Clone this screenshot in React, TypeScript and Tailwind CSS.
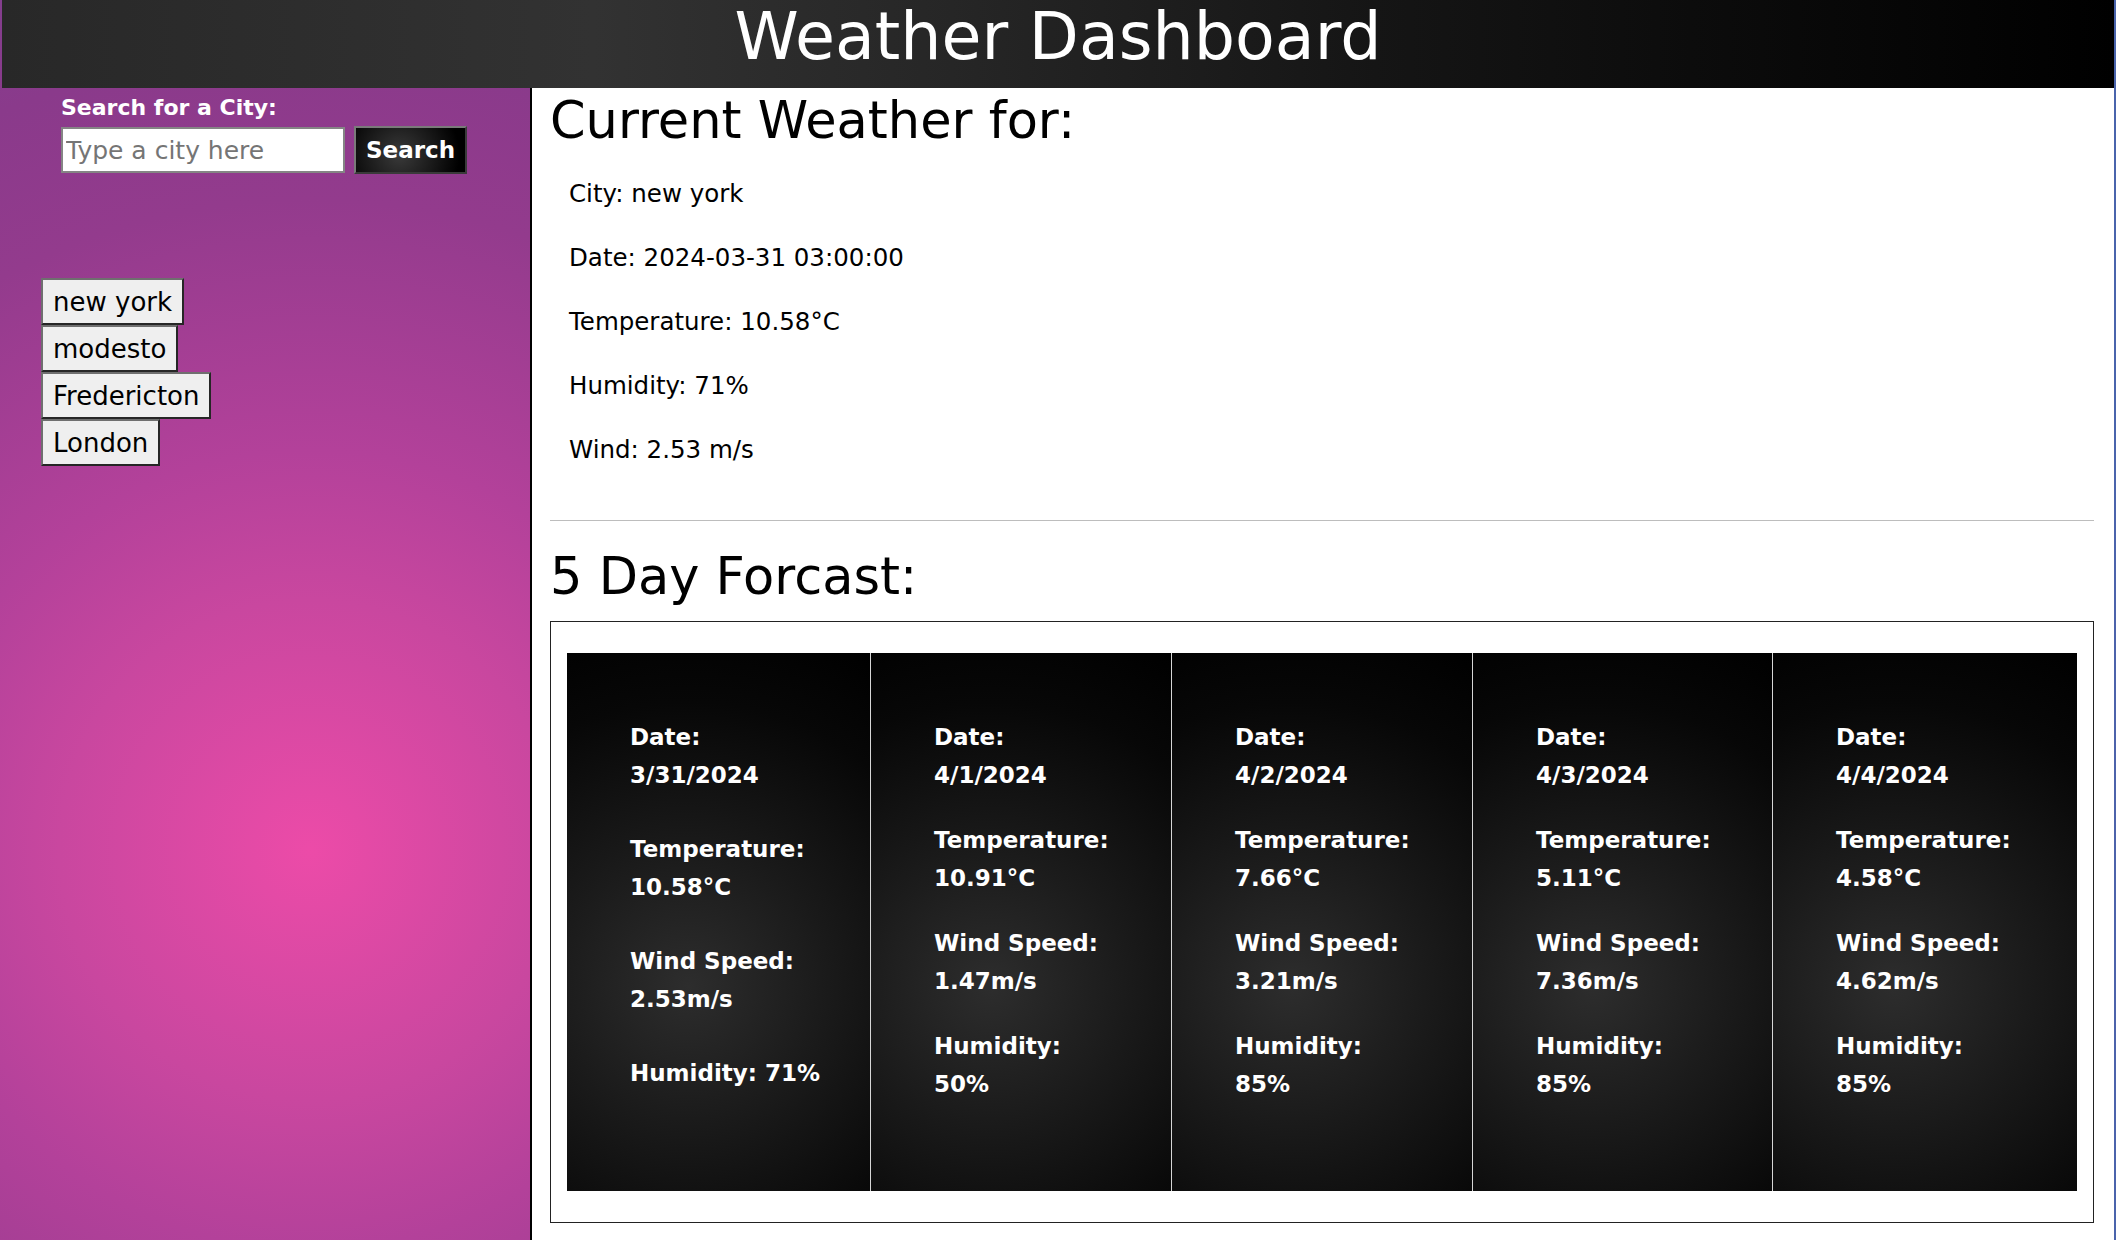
import React from "react";

type Day = { date: string; temp: string; wind: string; hum: string; single?: boolean };

const days: Day[] = [
  { date: "3/31/2024", temp: "10.58°C", wind: "2.53m/s", hum: "71%", single: true },
  { date: "4/1/2024", temp: "10.91°C", wind: "1.47m/s", hum: "50%" },
  { date: "4/2/2024", temp: "7.66°C", wind: "3.21m/s", hum: "85%" },
  { date: "4/3/2024", temp: "5.11°C", wind: "7.36m/s", hum: "85%" },
  { date: "4/4/2024", temp: "4.58°C", wind: "4.62m/s", hum: "85%" },
];

const cities = ["new york", "modesto", "Fredericton", "London"];

function Item({ label, value }: { label: string; value: string }) {
  return (
    <div className="whitespace-nowrap">
      <div>{label}</div>
      <div>{value}</div>
    </div>
  );
}

function Card({ d }: { d: Day }) {
  return (
    <div className="bg-[radial-gradient(circle_at_40%_62%,#2d2d2d_0%,#1b1b1b_35%,#070707_75%,#000_100%)] border-[#d6d6d6]">
      <div
        className={
          "pt-[65px] pl-[63px] flex flex-col text-white font-bold text-[23px] leading-[38px] " +
          (d.single ? "gap-[36px]" : "gap-[27px]")
        }
      >
        <Item label="Date:" value={d.date} />
        <Item label="Temperature:" value={d.temp} />
        <Item label="Wind Speed:" value={d.wind} />
        {d.single ? (
          <div className="whitespace-nowrap">Humidity: {d.hum}</div>
        ) : (
          <Item label="Humidity:" value={d.hum} />
        )}
      </div>
    </div>
  );
}

export default function App() {
  return (
    <div className="min-h-screen w-full px-[2px] flex flex-col font-['DejaVu_Sans',sans-serif] bg-[radial-gradient(circle_at_310px_850px,#ec4ba8_0px,#c9479f_250px,#b3419a_400px,#933b8d_650px,#8a3a8b_800px,#4a64ac_1850px)]">
      <header className="h-[88px] shrink-0 flex justify-center pt-[4px] bg-[linear-gradient(90deg,#282828_0%,#323232_28%,#262626_45%,#151515_65%,#000_100%)]">
        <h1 className="text-[65px] leading-none text-white">Weather Dashboard</h1>
      </header>
      <div className="flex flex-1">
        <aside className="w-[528px] shrink-0 flex flex-col">
          <div className="pl-[59px] pt-[7px]">
            <label className="block font-bold text-[22px] leading-[26px] text-white">
              Search for a City:
            </label>
            <div className="mt-[5px] flex items-center">
              <input
                type="text"
                placeholder="Type a city here"
                className="w-[284px] h-[46px] bg-white border-2 border-[#858585] px-[3px] text-[25px] text-black placeholder:text-[#757575] outline-none"
              />
              <button className="ml-[9px] w-[113px] h-[48px] border-2 border-t-[#7a7a7a] border-l-[#7a7a7a] border-r-[#3a3a3a] border-b-[#3a3a3a] bg-[radial-gradient(circle_at_40%_60%,#3a3a3a,#000_85%)] text-white font-bold text-[23px] flex items-center justify-center">
                Search
              </button>
            </div>
          </div>
          <div className="mt-[104px] pl-[39px] flex flex-col items-start">
            {cities.map((c) => (
              <button
                key={c}
                className="h-[47px] px-[10px] border-2 border-t-[#6f6f6f] border-l-[#6f6f6f] border-r-[#262626] border-b-[#262626] bg-[#efefef] text-black text-[26px] leading-none flex items-center"
              >
                {c}
              </button>
            ))}
          </div>
        </aside>
        <main className="flex-1 bg-white border-l-2 border-black pl-[18px] pr-[20px] pb-[16px]">
          <h2 className="mt-[7px] text-[51px] leading-[51px] text-black">Current Weather for:</h2>
          <div className="mt-[16px] pl-[19px] text-[24.5px] leading-[64px] text-black">
            <div className="h-[64px]">City: new york</div>
            <div className="h-[64px]">Date: 2024-03-31 03:00:00</div>
            <div className="h-[64px]">Temperature: 10.58°C</div>
            <div className="h-[64px]">Humidity: 71%</div>
            <div className="h-[64px]">Wind: 2.53 m/s</div>
          </div>
          <div className="mt-[38px] h-px bg-[#bdbdbd]" />
          <h2 className="mt-[30px] text-[51px] leading-[51px] text-black">5 Day Forcast:</h2>
          <div className="mt-[19px] border border-[#222] px-4 py-[31px]">
            <div className="grid grid-cols-[304fr_301fr_301fr_300fr_304fr] h-[538px] divide-x divide-[#d6d6d6]">
              {days.map((d) => (
                <Card key={d.date} d={d} />
              ))}
            </div>
          </div>
        </main>
      </div>
    </div>
  );
}
